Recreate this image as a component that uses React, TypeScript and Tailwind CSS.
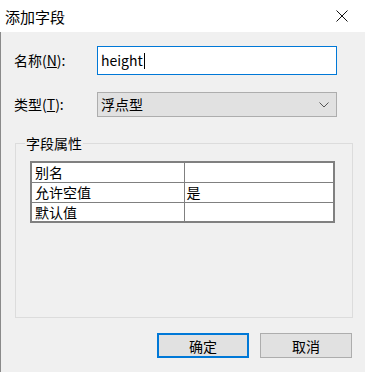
import React from 'react';

const font = { fontFamily: '"Microsoft YaHei UI", "Noto Sans CJK SC", "Noto Sans", sans-serif' };

const rows: [string, string][] = [
  ['别名', ''],
  ['允许空值', '是'],
  ['默认值', ''],
];

export default function App() {
  return (
    <div className="w-[365px] h-[372px] bg-[#f0f0f0] text-black flex flex-col overflow-hidden" style={font}>
      {/* title bar */}
      <div className="h-[32px] bg-white flex items-center justify-between pl-[5px] pr-[15px]">
        <span className="text-[15px] leading-none">添加字段</span>
        <svg width="12" height="12" viewBox="0 0 12 12" className="mr-[2px]">
          <path d="M0.5 0.5 L11.5 11.5 M11.5 0.5 L0.5 11.5" stroke="#111" strokeWidth="1" />
        </svg>
      </div>

      <div className="flex-1 border-l border-[#8a8a8a] pl-[13px] pt-[14px] flex flex-col">
        <div className="flex items-center h-[29px]">
          <span className="w-[83px] text-[14px]">
            名称(<span className="underline">N</span>):
          </span>
          <div className="w-[240px] h-[29px] bg-white border border-[#0078d7] flex items-center pl-[3px] text-[14px]">
            height<span className="w-px h-[16px] bg-black ml-px" />
          </div>
        </div>

        <div className="flex items-center h-[25px] mt-[17px]">
          <span className="w-[83px] text-[14px]">
            类型(<span className="underline">T</span>):
          </span>
          <div className="w-[240px] h-[25px] bg-[#e1e1e1] border border-[#adadad] flex items-center justify-between pl-[3px] pr-[7px] text-[14px]">
            <span>浮点型</span>
            <svg width="10" height="6" viewBox="0 0 10 6">
              <path d="M0.5 0.5 L5 5 L9.5 0.5" fill="none" stroke="#555" strokeWidth="1" />
            </svg>
          </div>
        </div>

        <fieldset className="ml-[1px] mt-[18px] w-[338px] h-[183px] border border-[#dcdcdc] px-0 pt-[10px]">
          <legend className="ml-[9px] px-[1px] text-[14px] leading-[16px]">字段属性</legend>
          <table className="ml-[14px] w-[305px] border-collapse border-2 border-[#808080] bg-white text-[14px]">
            <tbody>
              {rows.map(([k, v]) => (
                <tr key={k} className="h-[20px]">
                  <td className="w-[153px] border border-[#808080] pl-[3px] leading-[18px] py-0">{k}</td>
                  <td className="border border-[#808080] pl-[2px] leading-[18px] py-0">{v}</td>
                </tr>
              ))}
            </tbody>
          </table>
        </fieldset>

        <div className="flex justify-end gap-[11px] mt-[15px] pr-[13px]">
          <button className="w-[92px] h-[25px] bg-[#e1e1e1] border-2 border-[#0078d7] text-[14px] leading-none">
            确定
          </button>
          <button className="w-[92px] h-[25px] bg-[#e1e1e1] border border-[#adadad] text-[14px] leading-none">
            取消
          </button>
        </div>
      </div>
    </div>
  );
}
